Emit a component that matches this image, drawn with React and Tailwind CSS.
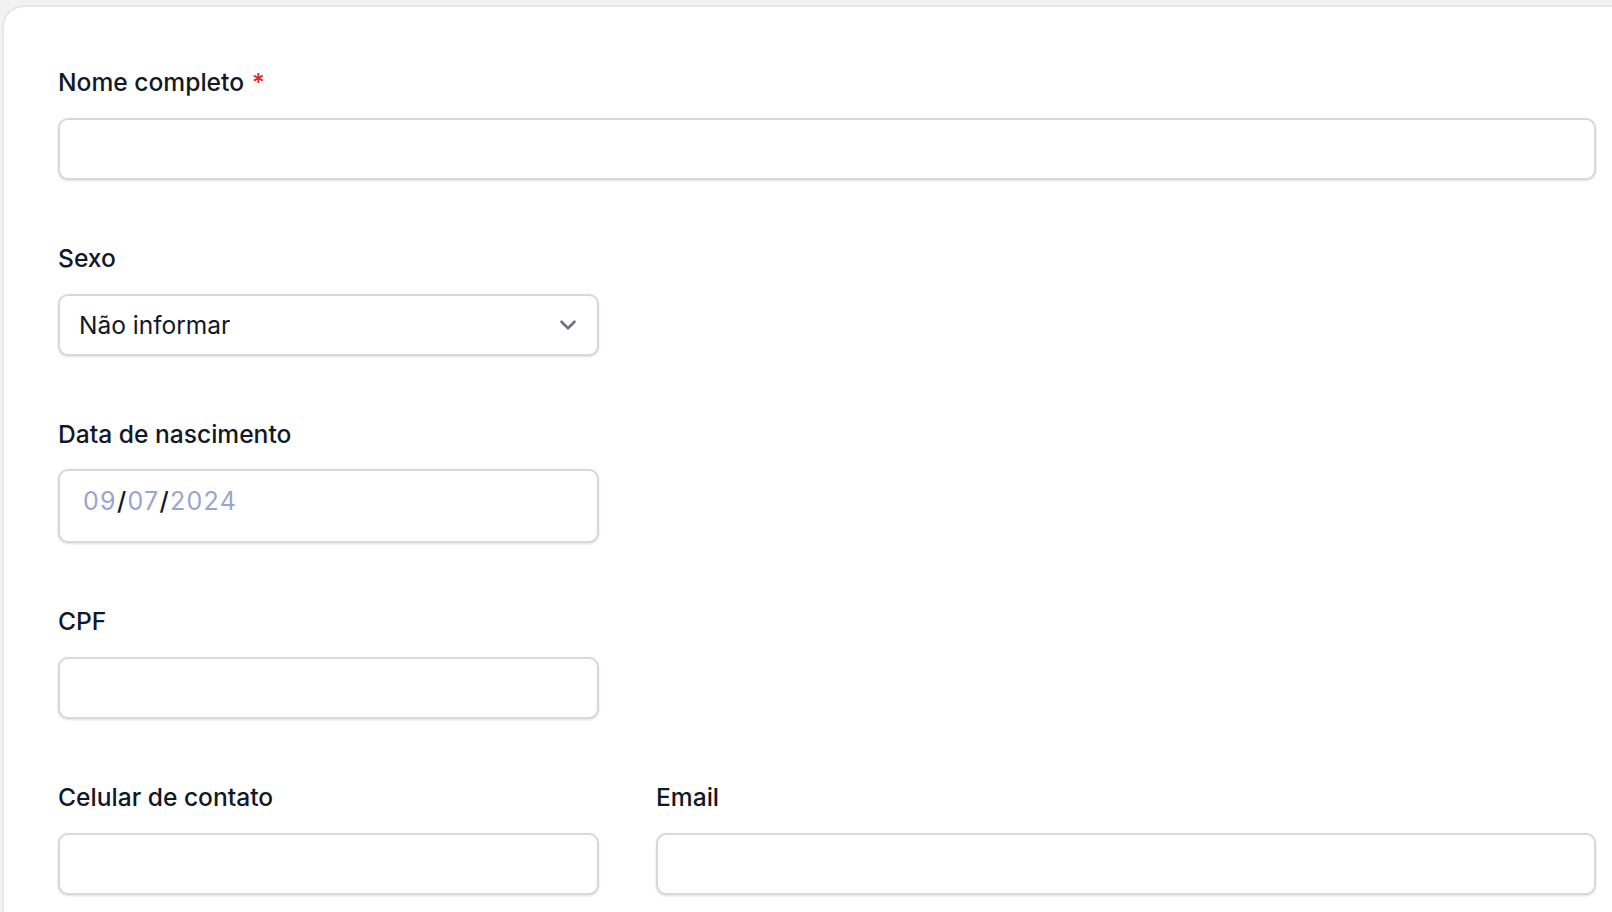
import { ChevronDown } from "lucide-react";

function Label({ children, required }) {
  return (
    <label className="block h-[36px] leading-[36px] text-[24.6px] font-medium text-[#111827] mb-[18px]">
      {children}
      {required && <span className="ml-[8px] text-[#dc2626]">*</span>}
    </label>
  );
}

function TextInput() {
  return (
    <input
      type="text"
      className="block w-full h-[62px] rounded-[10px] border-2 border-[#d5d8dd] bg-white px-[20px] text-[24px] text-[#111827] shadow-sm outline-none"
    />
  );
}

export default function App() {
  return (
    <div className="min-h-[912px] bg-[#f2f2f2] pt-[5px] pl-[2px] font-['Inter',sans-serif] overflow-hidden">
      <div className="min-h-[907px] bg-white border-l-2 border-t-2 border-[#e6e6e6] rounded-tl-[22px] pl-[54px] pr-[16px] pt-[57px]">
        <div className="flex flex-col gap-[60px]">
          <div>
            <Label required>Nome completo</Label>
            <TextInput />
          </div>

          <div className="w-[541px]">
            <Label>Sexo</Label>
            <div className="relative h-[62px] rounded-[10px] border-2 border-[#d5d8dd] bg-white shadow-sm flex items-center pl-[19px]">
              <span className="text-[24.5px] text-[#111827]">Não informar</span>
              <ChevronDown
                size={26}
                strokeWidth={2.4}
                className="absolute right-[16px] top-1/2 -translate-y-1/2 text-[#6b7280]"
              />
            </div>
          </div>

          <div className="w-[541px]">
            <Label>Data de nascimento</Label>
            <div className="-mt-[1px] h-[74px] rounded-[10px] border-2 border-[#d5d8dd] bg-white shadow-sm flex items-center pl-[23px] pb-[8px]">
              <span className="text-[25px] tracking-[1.3px] text-[#97a6d1]">
                09<span className="text-[#111827] font-medium">/</span>07
                <span className="text-[#111827] font-medium">/</span>2024
              </span>
            </div>
          </div>

          <div className="w-[541px]">
            <Label>CPF</Label>
            <TextInput />
          </div>

          <div className="flex gap-[57px]">
            <div className="w-[541px]">
              <Label>Celular de contato</Label>
              <TextInput />
            </div>
            <div className="flex-1">
              <Label>Email</Label>
              <TextInput />
            </div>
          </div>
        </div>
      </div>
    </div>
  );
}
